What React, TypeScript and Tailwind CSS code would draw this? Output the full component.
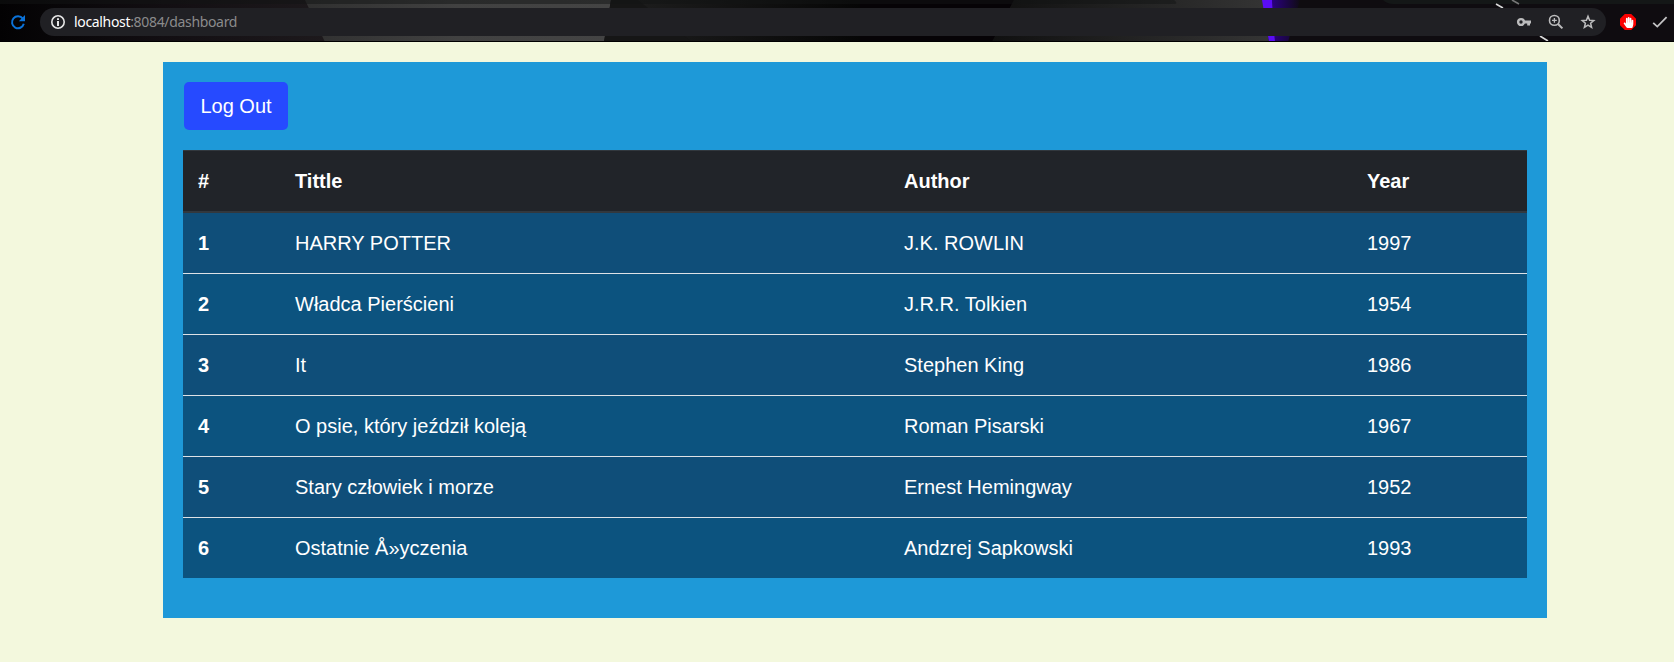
import React from "react";
import { FaHandPaper } from "react-icons/fa";

type Book = { id: number; title: string; author: string; year: number };

const books: Book[] = [
  { id: 1, title: "HARRY POTTER", author: "J.K. ROWLIN", year: 1997 },
  { id: 2, title: "Władca Pierścieni", author: "J.R.R. Tolkien", year: 1954 },
  { id: 3, title: "It", author: "Stephen King", year: 1986 },
  { id: 4, title: "O psie, który jeździł koleją", author: "Roman Pisarski", year: 1967 },
  { id: 5, title: "Stary człowiek i morze", author: "Ernest Hemingway", year: 1952 },
  { id: 6, title: "Ostatnie Å»yczenia", author: "Andzrej Sapkowski", year: 1993 },
];

// Toolbar icons share a 16px box
function Icon({ className, children }: { className: string; children: React.ReactNode }) {
  return (
    <svg className={`size-4 shrink-0 ${className}`} viewBox="0 0 16 16" fill="none" stroke="currentColor" aria-hidden="true">
      {children}
    </svg>
  );
}

// Wallpaper showing through the browser toolbar
function ToolbarBackdrop() {
  return (
    <svg className="absolute inset-0" width="1674" height="42" viewBox="0 0 1674 42" aria-hidden="true">
      <defs>
        <linearGradient id="left" x1="0" x2="1" y1="0" y2="0">
          <stop offset="0" stopColor="#030203" />
          <stop offset="0.5" stopColor="#120e12" />
          <stop offset="1" stopColor="#1d191c" />
        </linearGradient>
        <linearGradient id="grey" x1="0" x2="1" y1="0" y2="0">
          <stop offset="0" stopColor="#303030" />
          <stop offset="0.5" stopColor="#414141" />
          <stop offset="1" stopColor="#444444" />
        </linearGradient>
        <linearGradient id="fade" x1="0" x2="1" y1="0" y2="0">
          <stop offset="0" stopColor="#1c1c1c" />
          <stop offset="1" stopColor="#060606" />
        </linearGradient>
        <linearGradient id="rise" x1="0" x2="1" y1="0" y2="0">
          <stop offset="0" stopColor="#101010" />
          <stop offset="1" stopColor="#343434" />
        </linearGradient>
        <linearGradient id="violet" x1="0" x2="1" y1="0" y2="0">
          <stop offset="0" stopColor="#2a0080" />
          <stop offset="1" stopColor="#0f0b14" />
        </linearGradient>
      </defs>
      <rect width="1674" height="42" fill="#0f0c10" />
      <rect width="325" height="42" fill="url(#left)" />
      <polygon points="305,0 611,0 604,42 325,42" fill="url(#grey)" />
      <polygon points="611,0 640,0 692,42 604,42" fill="#161616" />
      <polygon points="638,0 860,0 860,42 692,42" fill="url(#fade)" />
      <polygon points="860,0 1014,0 992,42 860,42" fill="#060306" />
      <polygon points="1014,0 1263,0 1269,42 992,42" fill="url(#rise)" />
      <polygon points="1272,0 1300,0 1288,42 1275,42" fill="url(#violet)" />
      <polygon points="1262,0 1272,0 1275,42 1269,42" fill="#5a0cf5" />
      <path d="M0 0H1174Q1179 4 1174 4H0Z" fill="#121414" fillOpacity="0.5" />
      <path d="M1383 0H1674V4H1393Q1387 4 1383 0Z" fill="#141717" />
      <path d="M1496 4L1503 8M1540 36L1548 41" stroke="#d8d8d8" strokeWidth="1.6" />
      <path d="M1512 0L1519 4" stroke="#777777" strokeWidth="1.6" />
      <rect y="41" width="1674" height="1" fill="#000000" />
    </svg>
  );
}

function BrowserToolbar() {
  return (
    <header className="relative h-[42px] overflow-hidden">
      <ToolbarBackdrop />
      <div className="relative flex h-[44px] items-center">
        <div className="flex w-10 shrink-0 pl-[10px]">
          <Icon className="text-[#0b72d8]">
            <path d="M12.8 4.6A6 6 0 1 0 13.8 9.8" strokeWidth="2" />
            <path d="M15 1V7.2H8.8Z" fill="currentColor" stroke="none" />
          </Icon>
        </div>
        <div className="flex h-7 w-[1566px] shrink-0 items-center rounded-full bg-[#202024] pr-[10px] pl-[10px]">
          <Icon className="text-[#e6e6e6]">
            <circle cx="8" cy="8" r="6.2" strokeWidth="1.6" />
            <path d="M8 4.2V6M8 7V12" strokeWidth="2" />
          </Icon>
          <div className="ml-2 flex-1 font-['Noto_Sans','Open_Sans',sans-serif] text-[14px] leading-7 tracking-[-0.33px] whitespace-nowrap text-[#8b8b8c]">
            <span className="text-white">localhost</span>:8084/dashboard
          </div>
          <Icon className="text-[#bcbcbd]">
            <circle cx="5" cy="8" r="2.9" strokeWidth="2.4" />
            <path d="M8 8H15M12.6 8V11.5" strokeWidth="2.8" />
          </Icon>
          <Icon className="ml-4 text-[#bcbcbd]">
            <circle cx="6.4" cy="6.4" r="4.9" strokeWidth="1.6" />
            <path d="M10 10L14.4 14.4" strokeWidth="2" />
            <path d="M6.4 4V8.8M4 6.4H8.8" strokeWidth="1.3" />
          </Icon>
          <Icon className="ml-4 text-[#bcbcbd]">
            <path d="M8 2.3L9.6 6.2L13.8 6.5L10.6 9.3L11.6 13.4L8 11.2L4.4 13.4L5.4 9.3L2.2 6.5L6.4 6.2Z" strokeWidth="1.5" />
          </Icon>
        </div>
        <div className="ml-[14px] flex">
          <div className="flex size-4 items-center justify-center bg-[#fb0000] [clip-path:polygon(30%_0,70%_0,100%_30%,100%_70%,70%_100%,30%_100%,0_70%,0_30%)]">
            <FaHandPaper className="size-[11px] text-white" />
          </div>
        </div>
        <Icon className="ml-4 text-[#c3c3c4]">
          <path d="M1.2 8.8L5.3 12.6L14.6 3.2" strokeWidth="1.8" />
        </Icon>
      </div>
    </header>
  );
}

function BookTable() {
  return (
    <table className="mt-5 w-[1344px] table-fixed border-separate border-spacing-0 text-left text-white">
      <colgroup>
        <col className="w-[97px]" />
        <col className="w-[609px]" />
        <col className="w-[463px]" />
        <col className="w-[175px]" />
      </colgroup>
      <thead>
        <tr className="h-[63px] bg-[#212429]">
          {["#", "Tittle", "Author", "Year"].map((label) => (
            <th key={label} className="border-t border-b-2 border-t-[#32383e] border-b-[#32383e] px-[15px] py-0 font-bold">
              {label}
            </th>
          ))}
        </tr>
      </thead>
      <tbody className="[&_td]:border-t [&_td]:border-[#dee2e6] [&_th]:border-t [&_th]:border-[#dee2e6] [&>tr:first-child>*]:border-t-0">
        {books.map((book) => (
          <tr key={book.id} className="h-[61px] odd:bg-[#0f4e79] even:bg-[#0c537f] first:h-[60px]">
            <th scope="row" className="px-[15px] py-0 font-bold">{book.id}</th>
            <td className="px-[15px] py-0">{book.title}</td>
            <td className="px-[15px] py-0">{book.author}</td>
            <td className="px-[15px] py-0">{book.year}</td>
          </tr>
        ))}
      </tbody>
    </table>
  );
}

export default function App() {
  return (
    <div className="h-[662px] w-[1674px] overflow-hidden bg-[#f3f8dd] font-['Liberation_Sans',Arial,sans-serif] text-[20px] leading-[30px]">
      <BrowserToolbar />
      <main className="mt-5 ml-[163px] h-[556px] w-[1384px] bg-[#1e99d8] px-5 pt-5">
        <button className="ml-px block h-12 w-[104px] rounded-[5px] bg-[#264aff] text-white">Log Out</button>
        <BookTable />
      </main>
    </div>
  );
}
